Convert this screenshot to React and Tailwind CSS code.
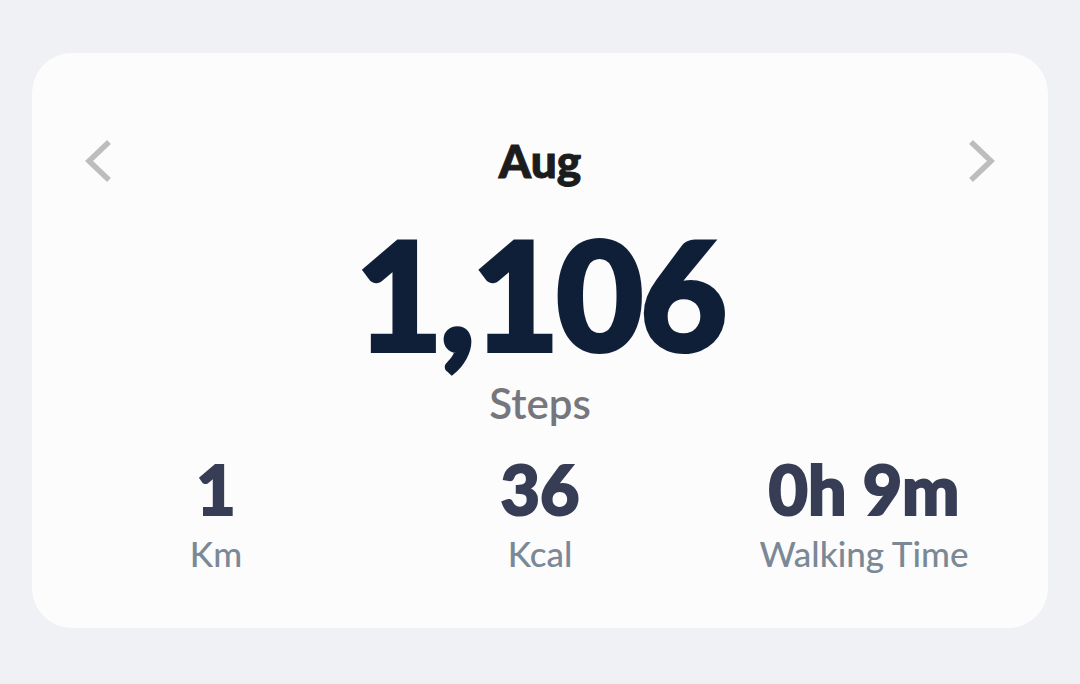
import React from "react";

function Chevron({ dir }) {
  const d = dir === "left" ? "M25 3 L5 22 L25 41" : "M5 3 L25 22 L5 41";
  return (
    <svg width="30" height="44" viewBox="0 0 30 44" fill="none">
      <path d={d} stroke="#bdbdbd" strokeWidth="5.5" strokeLinecap="butt" strokeLinejoin="miter" />
    </svg>
  );
}

function Stat({ value, label }) {
  return (
    <div className="flex flex-col items-center">
      <div className="text-[68px] leading-none font-black text-[#363d55] [-webkit-text-stroke:2px_#363d55]">{value}</div>
      <div className="mt-[13px] text-[35px] leading-none font-medium text-[#7b8896]">{label}</div>
    </div>
  );
}

export default function App() {
  return (
    <div
      className="w-[1080px] h-[684px] bg-[#f0f1f5] pt-[53px] px-[32px]"
      style={{ fontFamily: "Lato, 'Noto Sans', sans-serif" }}
    >
      <div className="bg-[#fcfcfc] rounded-[40px] h-[575px] pt-[85px] px-[22px]">
        <div className="flex items-center justify-between px-[30px] h-[46px]">
          <Chevron dir="left" />
          <div className="text-[46px] leading-none font-black text-[#1c1c1c] [-webkit-text-stroke:1px_#1c1c1c]">Aug</div>
          <Chevron dir="right" />
        </div>
        <div className="mt-[27px] flex flex-col items-center">
          <div className="text-[150px] leading-[1.1] font-black text-[#0f1f38] tracking-[-3px] [-webkit-text-stroke:4px_#0f1f38]">1,106</div>
          <div className="mt-[6px] text-[42px] leading-none font-semibold text-[#75777c]">Steps</div>
        </div>
        <div className="mt-[31px] grid grid-cols-3">
          <Stat value="1" label="Km" />
          <Stat value="36" label="Kcal" />
          <Stat value="0h 9m" label="Walking Time" />
        </div>
      </div>
    </div>
  );
}
